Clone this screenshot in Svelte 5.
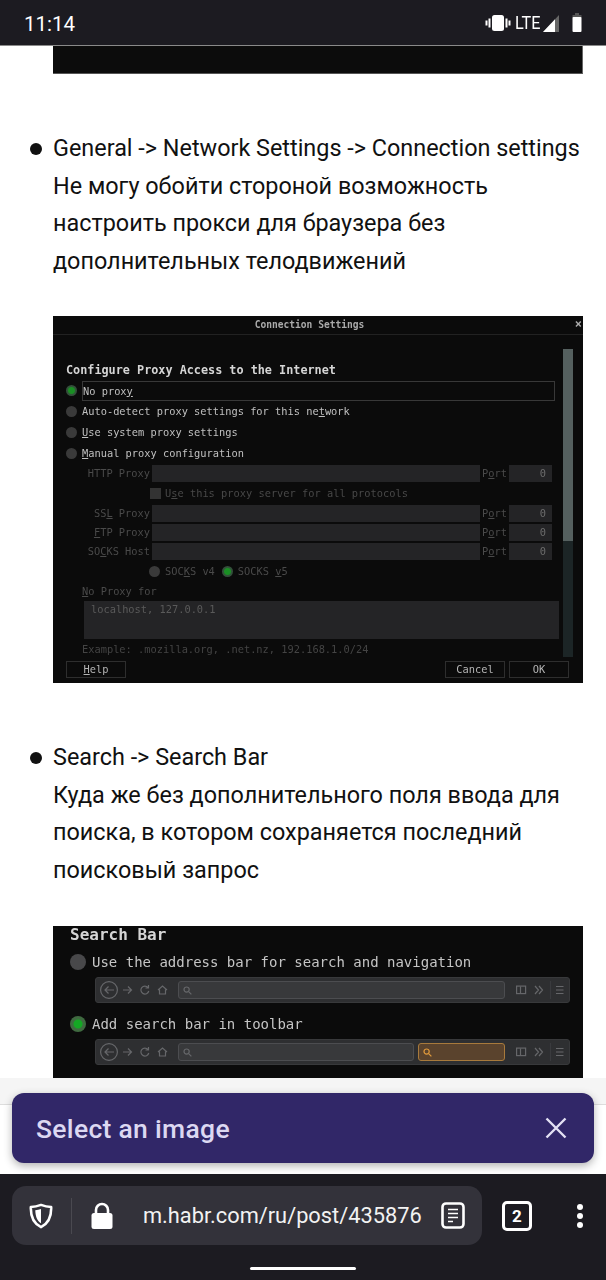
<script>
  const proxies = [
    { label: "HTTP Proxy", u: -1 },
    { label: "SSL Proxy", u: 2 },
    { label: "FTP Proxy", u: 0 },
    { label: "SOCKS Host", u: 2 },
  ];
</script>

<div class="screen">
  <header class="status">
    <span class="time">11:14</span>
    <div class="status-icons">
      <svg width="26" height="18" viewBox="0 0 26 18" fill="#fff">
        <rect x="7" y="1" width="12" height="16" rx="2.5" />
        <rect x="3.5" y="4.5" width="2" height="9" />
        <rect x="20.5" y="4.5" width="2" height="9" />
        <rect x="0.5" y="6.5" width="2" height="5" />
        <rect x="23.5" y="6.5" width="2" height="5" />
      </svg>
      <span class="lte">LTE</span>
      <svg class="signal" width="17" height="18" viewBox="0 0 17 18">
        <path d="M0 18 L16 1 V18 Z" fill="#666" />
        <path d="M0 18 L12 5.2 V18 Z" fill="#fff" />
      </svg>
      <svg class="battery" width="10" height="19" viewBox="0 0 10 19">
        <rect x="3" y="0" width="4" height="2" fill="#555" />
        <rect x="0.5" y="2" width="9" height="3" fill="#555" />
        <rect x="0.5" y="4" width="9" height="15" rx="1" fill="#fff" />
      </svg>
    </div>
  </header>

  <main class="page">
    <div class="strip"></div>

    <ul>
      <li>
        General -&gt; Network Settings -&gt; Connection settings<br />
        Не могу обойти стороной возможность настроить прокси для браузера без дополнительных телодвижений
      </li>
    </ul>

    <div class="shot dialog">
      <div class="dialog-title">
        <span>Connection Settings</span>
        <span class="close">×</span>
      </div>
      <div class="dialog-main">
        <div class="dialog-content">
          <div class="heading">Configure Proxy Access to the Internet</div>
          <div class="radio-row"><i class="radio on"></i><span class="focus">No prox<u>y</u></span></div>
          <div class="radio-row"><i class="radio"></i><span>Auto-detect proxy settings for this ne<u>t</u>work</span></div>
          <div class="radio-row"><i class="radio"></i><span><u>U</u>se system proxy settings</span></div>
          <div class="radio-row"><i class="radio"></i><span><u>M</u>anual proxy configuration</span></div>

          <div class="proxy-grid">
            {#each proxies as p, i}
              <span class="label">{#if p.u >= 0}{p.label.slice(0, p.u)}<u>{p.label[p.u]}</u>{p.label.slice(p.u + 1)}{:else}{p.label}{/if}</span>
              <span class="field"></span>
              <span class="label port">P<u>o</u>rt</span>
              <span class="field num">0</span>
              {#if i == 0}
                <div class="check-row"><i class="check"></i><span>U<u>s</u>e this proxy server for all protocols</span></div>
              {/if}
            {/each}
          </div>

          <div class="socks">
            <i class="radio small"></i><span class="dim">SOC<u>K</u>S v4</span>
            <i class="radio small on"></i><span class="dim">SOCKS <u>v</u>5</span>
          </div>
          <div class="noproxy dim"><u>N</u>o Proxy for</div>
          <div class="textarea">localhost, 127.0.0.1</div>
          <div class="example">Example: .mozilla.org, .net.nz, 192.168.1.0/24</div>
        </div>
        <div class="scrollbar"><div class="thumb"></div></div>
      </div>
      <div class="dialog-buttons">
        <span class="btn help"><u>H</u>elp</span>
        <span class="btn cancel">Cancel</span>
        <span class="btn ok">OK</span>
      </div>
    </div>

    <ul class="second">
      <li>
        Search -&gt; Search Bar<br />
        Куда же без дополнительного поля ввода для поиска, в котором сохраняется последний поисковый запрос
      </li>
    </ul>

    <div class="shot searchbar">
      <div class="sb-title">Search Bar</div>
      <div class="sb-row"><i class="radio big"></i><span>Use the address bar for search and navigation</span></div>
      <div class="toolbar">
        <svg class="nav" width="74" height="18" viewBox="0 0 74 18" fill="none" stroke="#66676a" stroke-width="1.2">
          <circle cx="9" cy="9" r="8.4" />
          <path d="M14 9H5M8.5 5.5 5 9l3.5 3.500M23 9h8M28 5.500 31.500 9 28 12.500M48 6.500a4 4 0 1 0 .8 3.500M48.500 4v3h-3M58 9l4.500-4 4.500 4M59.500 8.500V13h6V8.500" />
        </svg>
        <span class="tb-field grow"><svg width="9" height="9" viewBox="0 0 9 9" fill="none" stroke="#66676a" stroke-width="1.2"><circle cx="3.6" cy="3.6" r="2.6" /><path d="M5.6 5.6 8.4 8.4" /></svg></span>
        <svg class="tail" width="60" height="18" viewBox="0 0 60 18" fill="none" stroke="#66676a" stroke-width="1.2">
          <rect x="6.6" y="5.1" width="9" height="7.500" />
          <path d="M10.500 5.500v7M25 5l3.500 4-3.500 4M29 5l3.500 4-3.500 4M46 5.500h7.500M46 9h7.500M46 12.500h7.500" />
          <path d="M40.500 0v18" stroke="#3a3b3e" />
        </svg>
      </div>
      <div class="sb-row add"><i class="radio big on"></i><span>Add search bar in toolbar</span></div>
      <div class="toolbar">
        <svg class="nav" width="74" height="18" viewBox="0 0 74 18" fill="none" stroke="#66676a" stroke-width="1.2">
          <circle cx="9" cy="9" r="8.4" />
          <path d="M14 9H5M8.5 5.5 5 9l3.5 3.500M23 9h8M28 5.500 31.500 9 28 12.500M48 6.500a4 4 0 1 0 .8 3.500M48.500 4v3h-3M58 9l4.500-4 4.500 4M59.500 8.500V13h6V8.500" />
        </svg>
        <span class="tb-field grow"><svg width="9" height="9" viewBox="0 0 9 9" fill="none" stroke="#66676a" stroke-width="1.2"><circle cx="3.6" cy="3.6" r="2.6" /><path d="M5.6 5.6 8.4 8.4" /></svg></span>
        <span class="tb-field orange"><svg width="9" height="9" viewBox="0 0 9 9" fill="none" stroke="#e09a3c" stroke-width="1.2"><circle cx="3.6" cy="3.6" r="2.6" /><path d="M5.6 5.6 8.4 8.4" /></svg></span>
        <svg class="tail" width="60" height="18" viewBox="0 0 60 18" fill="none" stroke="#66676a" stroke-width="1.2">
          <rect x="6.6" y="5.1" width="9" height="7.500" />
          <path d="M10.500 5.500v7M25 5l3.500 4-3.500 4M29 5l3.500 4-3.500 4M46 5.500h7.500M46 9h7.500M46 12.500h7.500" />
          <path d="M40.500 0v18" stroke="#3a3b3e" />
        </svg>
      </div>
    </div>

    <div class="page-end"></div>
  </main>

  <div class="snackbar">
    <span>Select an image</span>
    <svg width="22" height="22" viewBox="0 0 22 22" stroke="#e4e1f4" stroke-width="2.4" fill="none">
      <path d="M1.5 1.5 20.5 20.5M20.5 1.5 1.5 20.5" />
    </svg>
  </div>

  <footer class="bottom">
    <div class="bar">
      <div class="pill">
        <svg width="24" height="26" viewBox="0 0 26 28">
          <path d="M13 2C9 3.600 5.500 4.200 2 4.200 1.600 14 4.500 22 13 26c8.500-4 11.400-12 11-21.800-3.500 0-7-.6-11-2.200Z" fill="none" stroke="#fff" stroke-width="2.800" stroke-linejoin="round" />
          <path d="M13 6.500c-2 .7-4 1.100-6.200 1.200C7 14 8.500 19 13 21.800Z" fill="#fff" />
        </svg>
        <span class="sep"></span>
        <svg class="lock" width="22" height="28" viewBox="0 0 22 28" fill="#fff">
          <path d="M5 12V8a6 6 0 0 1 12 0v4" fill="none" stroke="#fff" stroke-width="2.600" />
          <rect x="0.500" y="11" width="21" height="16" rx="2.500" />
        </svg>
        <span class="url">m.habr.com/ru/post/435876</span>
        <svg class="reader" width="24" height="27" viewBox="0 0 24 27" fill="none" stroke="#fff">
          <rect x="1.500" y="1.500" width="21" height="24" rx="3.500" stroke-width="2.600" />
          <path d="M7 7.500h10M7 11.500h10M7 15.500h10M7 19.500h5" stroke-width="1.600" />
        </svg>
      </div>
      <div class="tabs">2</div>
      <svg class="kebab" width="8" height="24" viewBox="0 0 8 24" fill="#fff">
        <circle cx="4" cy="3" r="3" />
        <circle cx="4" cy="12" r="3" />
        <circle cx="4" cy="21" r="3" />
      </svg>
    </div>
    <div class="handle"></div>
  </footer>
</div>

<style>
  :global(body) {
    background: #fff;
  }
  .screen {
    position: relative;
    width: 606px;
    height: 1280px;
    display: flex;
    flex-direction: column;
    overflow: hidden;
    font-family: Roboto, sans-serif;
  }
  .status {
    height: 46px;
    flex: none;
    box-sizing: border-box;
    background: #1c1b21;
    border-bottom: 1px solid #8a8a8a;
    display: flex;
    align-items: center;
    justify-content: space-between;
    padding: 0 24px;
    color: #fff;
  }
  .time {
    font-size: 20.500px;
    padding-top: 2px;
  }
  .status-icons {
    display: flex;
    align-items: center;
  }
  .lte {
    font-size: 18px;
    margin-left: 4px;
    transform: scaleX(0.9);
    transform-origin: left;
    width: 28px;
  }
  .battery {
    margin-left: 12px;
  }

  .page {
    flex: 1;
    min-height: 0;
    overflow: hidden;
    color: #111;
    font-size: 23.400px;
    line-height: 37.500px;
  }
  .strip {
    margin-left: 53px;
    width: 530px;
    background: #0c0c0c;
    border-right: 1px solid #666;
    border-bottom: 1px solid #555;
    box-sizing: border-box;
    height: 28px;
  }
  ul {
    margin: 56px 0 36px;
    padding: 0 20px 0 53px;
    width: 533px;
    list-style: none;
  }
  ul.second {
    margin: 56px 0 37px;
  }
  li {
    position: relative;
  }
  li::before {
    content: "";
    position: absolute;
    left: -23px;
    top: 13px;
    width: 12px;
    height: 12px;
    border-radius: 50%;
    background: #111;
  }

  .shot {
    margin-left: 53px;
    width: 530px;
    background: #0b0b0b;
    box-sizing: border-box;
    font-family: "DejaVu Sans Mono", monospace;
    line-height: 1;
    color: #c0c0c0;
  }
  .dialog-main,
  .dialog-buttons,
  .dialog-title span,
  .sb-title,
  .sb-row,
  .toolbar {
    filter: blur(0.35px);
  }
  u {
    text-underline-offset: 1px;
  }
  i {
    display: block;
    flex: none;
  }

  .dialog {
    height: 367px;
    font-size: 10.350px;
    display: flex;
    flex-direction: column;
  }
  .dialog-title {
    height: 18px;
    padding-right: 17px;
    border-bottom: 1px solid #222;
    display: flex;
    align-items: center;
    justify-content: center;
    position: relative;
    font-size: 9.600px;
    font-weight: bold;
    color: #aaa;
  }
  .close {
    position: absolute;
    right: 1px;
    top: 2px;
    font-size: 12px;
  }
  .dialog-main {
    display: flex;
    height: 326px;
  }
  .dialog-content {
    width: 510px;
    flex: none;
    padding-left: 13px;
    box-sizing: border-box;
  }
  .scrollbar {
    width: 10px;
    height: 308px;
    margin-top: 14px;
    background: #1c2526;
  }
  .thumb {
    height: 192px;
    background: #55605f;
  }
  .heading {
    height: 20px;
    margin-top: 25px;
    line-height: 20px;
    font-size: 11.800px;
    font-weight: bold;
    color: #d5d5d5;
  }
  .radio-row {
    height: 21px;
    display: flex;
    align-items: center;
    gap: 5px;
  }
  .radio {
    width: 11px;
    height: 11px;
    border-radius: 50%;
    background: #3a3a3a;
  }
  .radio.on {
    background: radial-gradient(circle, #1a8f24 0 3px, #33503a 4px);
  }
  .focus {
    flex: none;
    height: 20px;
    line-height: 19px;
    border: 1px solid #383838;
    box-sizing: border-box;
    width: 473px;
  }
  .proxy-grid {
    display: grid;
    grid-template-columns: 84px 328px 25px 43px;
    grid-template-rows: 17px 19px 17px 17px 17px;
    column-gap: 2px;
    row-gap: 2px;
    margin-top: 1px;
    width: 486px;
  }
  .label {
    color: #4a4a4a;
    text-align: right;
    line-height: 17px;
    white-space: nowrap;
  }
  .port {
    text-align: left;
  }
  .field {
    background: #242426;
  }
  .num {
    color: #6c6c6c;
    text-align: right;
    line-height: 17px;
    padding-right: 6px;
    box-sizing: border-box;
  }
  .check-row {
    grid-column: 1 / -1;
    display: flex;
    align-items: center;
    gap: 4px;
    padding-left: 84px;
    height: 19px;
    color: #484848;
  }
  .check {
    width: 11px;
    height: 11px;
    background: #333;
  }
  .socks {
    display: flex;
    align-items: center;
    height: 20px;
    margin-top: 1px;
    padding-left: 83px;
    gap: 5px;
  }
  .socks .dim + .radio {
    margin-left: 2px;
  }
  .radio.small {
    width: 11px;
    height: 11px;
  }
  .dim {
    color: #4a4a4a;
  }
  .noproxy {
    margin-top: 4px;
    height: 16px;
    padding-left: 16px;
    line-height: 12px;
  }
  .textarea {
    margin-left: 18px;
    width: 475px;
    height: 38px;
    padding: 3px 7px;
    box-sizing: border-box;
    background: #242426;
    color: #5a5a5a;
  }
  .example {
    margin-top: 4px;
    padding-left: 16px;
    color: #444;
    line-height: 12px;
  }
  .dialog-buttons {
    height: 22px;
    display: flex;
    align-items: flex-start;
  }
  .btn {
    box-sizing: border-box;
    height: 17px;
    border: 1px solid #2e2e2e;
    color: #b5b5b5;
    text-align: center;
    line-height: 15px;
  }
  .help {
    margin-left: 13px;
    width: 60px;
  }
  .cancel {
    margin-left: 319px;
    width: 60px;
  }
  .ok {
    margin-left: 4px;
    width: 60px;
  }

  .searchbar {
    height: 152px;
    overflow: hidden;
    padding-left: 17px;
    font-size: 14px;
    color: #c5c5c5;
  }
  .sb-title {
    height: 18px;
    font-size: 16px;
    font-weight: bold;
    line-height: 18px;
    color: #d5d5d5;
  }
  .sb-row {
    height: 20px;
    margin-top: 8px;
    display: flex;
    align-items: center;
    gap: 6px;
    line-height: 20px;
  }
  .sb-row.add {
    margin-top: 11px;
  }
  .radio.big {
    width: 16px;
    height: 16px;
    background: #48484a;
  }
  .radio.big.on {
    background: radial-gradient(circle, #14a824 0 4px, #3f6a40 5px);
  }
  .toolbar {
    height: 26px;
    margin: 5px 0 0 25px;
    width: 475px;
    box-sizing: border-box;
    background: #2e2f31;
    border: 1px solid #38393b;
    border-radius: 3px;
    display: flex;
    align-items: center;
    padding-left: 4px;
    gap: 4px;
  }
  .nav {
    flex: none;
  }
  .tail {
    flex: none;
    margin-left: 1px;
    margin-right: -1px;
  }
  .tb-field {
    height: 18px;
    border: 1px solid #4c4d50;
    border-radius: 3px;
    background: #38393b;
    box-sizing: border-box;
    display: flex;
    align-items: center;
    padding-left: 4px;
  }
  .grow {
    flex: 1;
  }
  .orange {
    width: 87px;
    flex: none;
    background: #5a432d;
    border-color: #a87a3c;
  }
  .page-end {
    height: 26px;
    background: #f5f5f5;
    border-bottom: 1px solid #ddd;
  }

  .snackbar {
    position: absolute;
    left: 12px;
    top: 1093px;
    width: 582px;
    height: 70px;
    box-sizing: border-box;
    padding: 0 27px 0 24px;
    border-radius: 12px;
    background: #312768;
    box-shadow: 0 3px 8px rgba(0, 0, 0, 0.3);
    display: flex;
    align-items: center;
    justify-content: space-between;
    color: #dcd8f2;
    font-size: 26.500px;
    font-weight: 500;
    letter-spacing: 0.3px;
  }

  .bottom {
    height: 106px;
    flex: none;
    box-sizing: border-box;
    background: #1c1b21;
    padding-top: 12px;
  }
  .bar {
    display: flex;
    align-items: center;
  }
  .bar svg {
    flex: none;
  }
  .pill {
    margin-left: 12px;
    width: 470px;
    height: 59px;
    flex: none;
    box-sizing: border-box;
    border-radius: 14px;
    background: #33323a;
    display: flex;
    align-items: center;
    padding-left: 17px;
    color: #f2f2f2;
  }
  .sep {
    width: 1px;
    height: 36px;
    margin-left: 18px;
    background: #4a4950;
  }
  .lock {
    margin-left: 19px;
  }
  .url {
    margin-left: 30px;
    width: 278px;
    flex: none;
    font-size: 21.800px;
    white-space: nowrap;
  }
  .reader {
    margin-left: 20px;
  }
  .tabs {
    margin-left: 20px;
    width: 30px;
    height: 30px;
    flex: none;
    box-sizing: border-box;
    border: 3px solid #fff;
    border-radius: 5px;
    color: #fff;
    font-size: 17px;
    font-weight: bold;
    line-height: 24px;
    text-align: center;
  }
  .kebab {
    margin-left: 44px;
  }
  .handle {
    width: 106px;
    height: 3px;
    margin: 22px auto 0;
    background: #fff;
    border-radius: 2px;
  }
</style>
